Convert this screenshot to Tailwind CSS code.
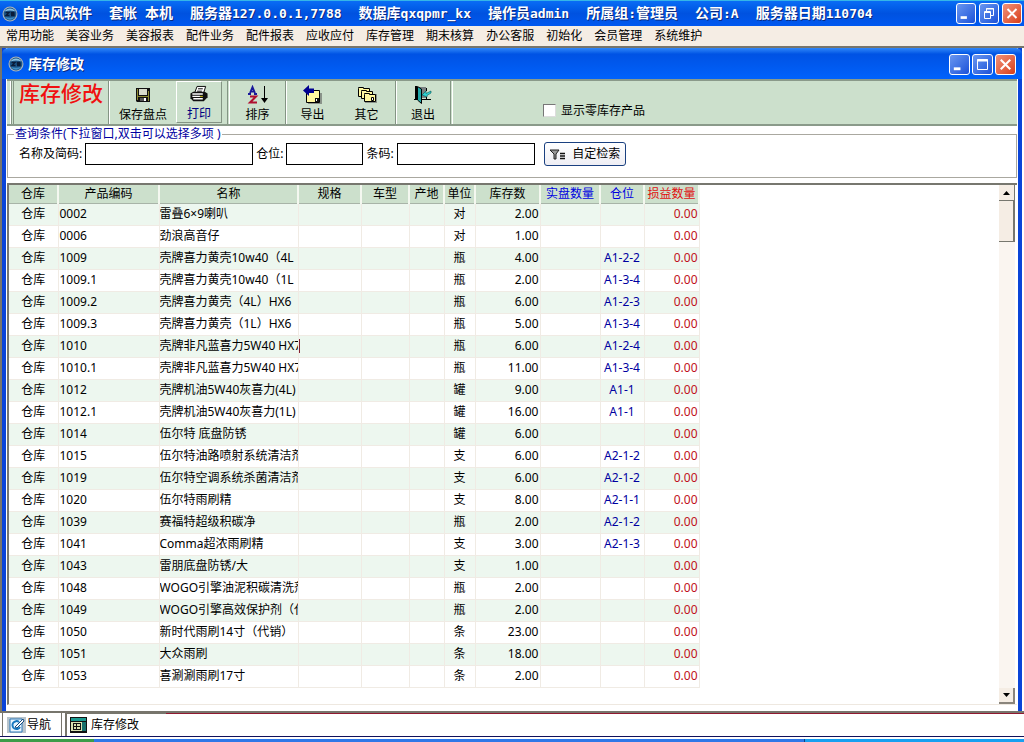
<!DOCTYPE html>
<html lang="zh-CN">
<head>
  <meta charset="UTF-8">
  <title>自由风软件 - 库存修改</title>
  <meta name="viewport" content="width=device-width, initial-scale=1.0">
  <script src="https://cdn.jsdelivr.net/npm/@tailwindcss/browser@4"></script>
</head>

<body class="min-h-screen flex flex-col bg-white text-black text-[12px] leading-4 font-['Noto_Sans','Noto_Sans_CJK_SC',sans-serif] whitespace-nowrap overflow-x-hidden">

  <!-- Shared symbols -->
  <svg class="hidden">
    <symbol id="logo" viewBox="0 0 16 16">
      <circle cx="8" cy="8" r="7.5" fill="#a9b4bc" />
      <circle cx="8" cy="8" r="6.4" fill="#1c5588" />
      <path d="M2.500 5.500C5 1.500 11 1.500 13.500 5.500C10 4 6 4 2.500 5.500Z" fill="#8cc4e4" />
      <path d="M3 11C6 14.500 10 14.500 13 11C10 12 6 12 3 11Z" fill="#3f8ec4" />
      <path d="M3.500 6.500H7L4 9.500H7.500M12.500 6.500H9.500V8H12V9.500H9" fill="none" stroke="#0a1c38" stroke-width="1.400" />
    </symbol>
    <symbol id="close" viewBox="0 0 20 20">
      <path d="M5 5L15 15M15 5L5 15" stroke="#fff" stroke-width="2.200" />
    </symbol>
    <symbol id="minimize" viewBox="0 0 20 20">
      <path d="M4 13H11V16H4Z" fill="#fff" />
    </symbol>
  </svg>

  <!-- Application title bar -->
  <header class="h-[26px] flex items-center border-t border-[#35b5e8] pl-[2px] pr-[2px] bg-linear-to-b from-[#0a6cf5] via-[#0052e0] to-[#0058f0] text-white text-[14px] font-bold [text-shadow:1px_1px_0_#0a2a80]">
    <svg class="w-4 h-4 mr-1"><use href="#logo" /></svg>
    <h1 class="flex gap-[17px]">
      <span>自由风软件</span>
      <span class="flex gap-2"><span>套帐</span><span>本机</span></span>
      <span>服务器<span class="font-['DejaVu_Sans_Mono',monospace] text-[13px]">127.0.0.1,7788</span></span>
      <span>数据库<span class="font-['DejaVu_Sans_Mono',monospace] text-[13px]">qxqpmr_kx</span></span>
      <span>操作员<span class="font-['DejaVu_Sans_Mono',monospace] text-[13px]">admin</span></span>
      <span>所属组<span class="font-['DejaVu_Sans_Mono',monospace] text-[13px]">:</span>管理员</span>
      <span>公司<span class="font-['DejaVu_Sans_Mono',monospace] text-[13px]">:A</span></span>
      <span>服务器日期<span class="font-['DejaVu_Sans_Mono',monospace] text-[13px]">110704</span></span>
    </h1>
    <div class="flex gap-[3px] ml-auto">
      <button aria-label="最小化" class="w-5 h-[21px] rounded-[3px] border border-white bg-linear-to-br from-[#6a96f0] to-[#1c50d8]"><svg class="w-full h-full"><use href="#minimize" /></svg></button>
      <button aria-label="还原" class="w-5 h-[21px] rounded-[3px] border border-white bg-linear-to-br from-[#6a96f0] to-[#1c50d8]">
        <svg class="w-full h-full" viewBox="0 0 18 19" fill="none" stroke="#fff"><path d="M6.500 7V4.500H13.500V11.500H11M6 5H14M4.500 7.500H10.500V14.500H4.500ZM4 8.500H11" /></svg>
      </button>
      <button aria-label="关闭" class="w-5 h-[21px] rounded-[3px] border border-white bg-linear-to-br from-[#f09078] to-[#d83c10]"><svg class="w-full h-full"><use href="#close" /></svg></button>
    </div>
  </header>

  <!-- Menu bar -->
  <nav class="h-5 flex items-center gap-3 pl-[6px] bg-[#f5ede4]">
    <a href="#">常用功能</a>
    <a href="#">美容业务</a>
    <a href="#">美容报表</a>
    <a href="#">配件业务</a>
    <a href="#">配件报表</a>
    <a href="#">应收应付</a>
    <a href="#">库存管理</a>
    <a href="#">期末核算</a>
    <a href="#">办公客服</a>
    <a href="#">初始化</a>
    <a href="#">会员管理</a>
    <a href="#">系统维护</a>
  </nav>

  <!-- Child window -->
  <main class="flex-1 flex flex-col border-t-2 border-l-2 border-t-[#77756c] border-l-[#77756c] pr-[2px] bg-white">
    <section class="flex-1 flex flex-col border-x-4 border-x-[#0a44d8]">
      <div class="h-[31px] -mx-1 flex items-center pl-[6px] pr-[6px] pt-px rounded-t-md bg-linear-to-b from-[#2f86f8] via-[#0052e4] via-20% to-[#0062fc] text-white font-bold [text-shadow:1px_1px_0_#0a2a80]">
        <svg class="w-4 h-4 mr-1"><use href="#logo" /></svg>
        <h2 class="text-[14px]">库存修改</h2>
        <div class="flex gap-[2px] ml-auto">
          <button aria-label="最小化" class="w-[21px] h-[21px] rounded-[3px] border border-white bg-linear-to-br from-[#6a96f0] to-[#1c50d8]"><svg class="w-full h-full"><use href="#minimize" /></svg></button>
          <button aria-label="最大化" class="w-[21px] h-[21px] rounded-[3px] border border-white bg-linear-to-br from-[#6a96f0] to-[#1c50d8]">
            <svg class="w-full h-full" viewBox="0 0 19 19" fill="none" stroke="#fff"><path d="M4.500 4.500H14.500V14.500H4.500Z" /><path d="M4 5.500H15" stroke-width="2" /></svg>
          </button>
          <button aria-label="关闭" class="w-[21px] h-[21px] rounded-[3px] border border-white bg-linear-to-br from-[#f09078] to-[#d83c10]"><svg class="w-full h-full"><use href="#close" /></svg></button>
        </div>
      </div>

      <!-- Toolbar -->
      <div class="h-[47px] flex mx-px border-t-2 border-t-[#8a9a8a] border-b-2 border-b-[#8a9a8a] bg-[#cce0cc] pl-[3px]">
        <div class="w-[2px] mr-px border-l border-white bg-[#849484]"></div>
        <div class="w-[96px] border-x border-[#849484] pl-[5px] text-[21px] leading-6 font-medium text-[#f01010]">库存修改</div>
        <div class="flex gap-1 border-l border-white pl-1 pr-1">
          <button class="w-[58px] flex flex-col items-center gap-[2px] pt-1">
            <svg class="w-5 h-5" viewBox="0 0 20 20"><path d="M3 3H17V17H4L3 16Z" fill="#111" /><path d="M4 4H5V15H4ZM15 6H16V16H15ZM4 11H16V12H4Z" fill="#8a8a30" /><path d="M6 4H14V10H6Z" fill="#d8dccb" /><path d="M7 13H13V16H7Z" fill="#555" /><path d="M11 13H13V16H11Z" fill="#fff" /></svg>
            保存盘点
          </button>
          <button class="w-[46px] h-[42px] flex flex-col items-center gap-[2px] pt-[3px] border border-t-white border-l-white border-r-[#849484] border-b-[#849484] text-[#000080]">
            <svg class="w-5 h-5" viewBox="0 0 20 20"><path d="M5.500 8L8 1.500H17L15 8Z" fill="#fff" stroke="#000" /><path d="M9 4H14M8 6.500H13" stroke="#000" /><path d="M1 9L4 7H16L19 9V13L15 17H4L1 14Z" fill="#111" /><path d="M3 9.500H14M3 12H11M4 14.500H14" stroke="#fff" stroke-width="1.400" /><path d="M11 12H14" stroke="#e0d020" /></svg>
            打印
          </button>
        </div>
        <div class="w-[3px] ml-px border-x border-l-[#849484] border-r-white"></div>
        <button class="w-[55px] flex flex-col items-center gap-[2px] pt-1">
          <svg class="w-[22px] h-5" viewBox="0 0 22 20" fill="none"><path d="M1 9H4M3 8L5.500 2L8 8M4 6.500H7M7 9H10" stroke="#1a1a9a" stroke-width="1.800" /><path d="M3 11.500H9L3 17.500H10" stroke="#b01030" stroke-width="2" /><path d="M17.500 1V17" stroke="#000" /><path d="M14 13H21L17.500 18Z" fill="#000" /></svg>
          排序
        </button>
        <div class="w-[2px] border-l border-[#849484] bg-white"></div>
        <button class="w-[51px] flex flex-col items-center gap-[2px] pt-1">
          <svg class="w-5 h-5" viewBox="0 0 20 20"><path d="M5 8H19V19H5Z" fill="#8a938a" /><path d="M3.500 6.500H7V5.500H16.500V17.500H3.500Z" fill="#fff8a0" stroke="#000" /><path d="M0 5.500L6 0V3.500H11V8H6V11Z" fill="#000090" /><path d="M12 13H16V17H12Z" fill="#111" /><path d="M13.500 14V16" stroke="#fff" /></svg>
          导出
        </button>
        <button class="w-[57px] flex flex-col items-center gap-[2px] pt-1">
          <svg class="w-5 h-5" viewBox="0 0 20 20" stroke="#000"><path d="M8 9H20V18H8Z" fill="#8a938a" stroke="none" /><path d="M1.500 3.500V2.500H6.500V3.500H12.500V11.500H1.500Z" fill="#fff8a0" /><path d="M4.500 6.500V5.500H9.500V6.500H15.500V13.500H4.500Z" fill="#fff8a0" /><path d="M7.500 9.500V8.500H12.500V9.500H18.500V16.500H7.500Z" fill="#fff8a0" /><path d="M14.500 12.500H16.500V15.500H14.500Z" fill="#fff" /></svg>
          其它
        </button>
        <div class="w-[2px] border-l border-[#849484] bg-white"></div>
        <button class="w-[52px] flex flex-col items-center gap-[2px] pt-1">
          <svg class="w-5 h-5" viewBox="0 0 20 20"><path d="M3 2H13V13H3Z" fill="#777f80" /><path d="M2 1H4V15H2ZM13 2V9M13 11V15" fill="#000" /><path d="M4.500 1.500L8.500 4V18.500L4.500 15Z" fill="#20a8a8" stroke="#000" /><path d="M18 6L13 8.500V6L9 10L14 12V10.500L18 8Z" fill="#30d0d0" stroke="#055" stroke-width=".6" /><path d="M1 14.500H4M9 14.500H18M13.500 3V6M13.500 12V14" stroke="#000" /></svg>
          退出
        </button>
        <div class="w-[3px] ml-px border-x border-l-[#849484] border-r-white"></div>
        <label class="flex items-center gap-[5px] ml-[90px] mt-4">
          <input type="checkbox" class="appearance-none w-[13px] h-[13px] bg-white border border-t-[#777] border-l-[#777] border-r-[#ddd] border-b-[#ddd]">
          显示零库存产品
        </label>
      </div>

      <!-- Query conditions -->
      <fieldset class="h-[52px] mx-px border border-[#aaa8a0] pl-[11px]">
        <legend class="ml-[-5px] px-px text-[#0000a0]">查询条件(下拉窗口,双击可以选择多项 )</legend>
        <div class="flex items-center gap-[3px]">
          <label for="name-code">名称及简码:</label>
          <input type="text" id="name-code" class="w-[168px] h-[22px] border border-black bg-white px-1">
          <label for="position">仓位:</label>
          <input type="text" id="position" class="w-[77px] h-[22px] border border-black bg-white px-1">
          <label for="barcode">条码:</label>
          <input type="text" id="barcode" class="w-[138px] h-[22px] border border-black bg-white px-1">
          <button class="w-[82px] h-6 ml-[6px] flex items-center justify-center gap-[6px] rounded-[3px] border border-[#1a4080] bg-linear-to-b from-white to-[#eeeef4]">
            <svg class="w-[17px] h-3" viewBox="0 0 17 12"><path d="M1 2H10L7 6V11H5V6Z" fill="#999" stroke="#222" /><path d="M11 5.500H16M11 8H16M11 10.500H16" stroke="#111" stroke-width="1.500" /></svg>
            自定检索
          </button>
        </div>
      </fieldset>

      <!-- Stock grid -->
      <div class="flex-1 flex items-stretch mt-[5px] mx-px mb-[6px] border-t-2 border-l-2 border-[#77776f] border-b border-b-[#eee8e0]">
        <div class="flex-1">
          <table class="table-fixed w-[690px] border-collapse">
            <colgroup>
              <col class="w-[49px]"><col class="w-[101px]"><col class="w-[139px]"><col class="w-[63px]"><col class="w-[48px]"><col class="w-[35px]"><col class="w-[31px]"><col class="w-[65px]"><col class="w-[60px]"><col class="w-[44px]"><col class="w-[55px]">
            </colgroup>
            <thead>
              <tr class="h-[18px] bg-[#cce0cc] [&>th]:font-normal [&>th]:p-0 [&>th]:border-r-2 [&>th]:border-r-[#f4f8f0] [&>th]:border-b [&>th]:border-b-[#a8b4a8]">
                <th>仓库</th><th>产品编码</th><th>名称</th><th>规格</th><th>车型</th><th>产地</th><th>单位</th><th>库存数</th>
                <th class="text-[#0000e0]">实盘数量</th><th class="text-[#0000e0]">仓位</th><th class="text-[#e01010]">损益数量</th>
              </tr>
            </thead>
            <tbody id="stock-rows"></tbody>
          </table>
        </div>
        <!-- Scroll bar -->
        <div class="w-4 flex flex-col mr-[2px] bg-[#faf5f0]">
          <button aria-label="向上" class="h-4 flex items-center justify-center bg-[#f5ede4] border-r border-b border-[#77776f]"><svg class="w-[7px] h-1" viewBox="0 0 7 4"><path d="M0 4L3.500 0L7 4Z" /></svg></button>
          <div class="h-[41px] bg-[#f5ede4] border-r-2 border-b border-[#77776f]"></div>
          <button aria-label="向下" class="h-4 mt-auto flex items-center justify-center bg-[#f5ede4] border-r-2 border-b-2 border-[#8a857c]"><svg class="w-[7px] h-1" viewBox="0 0 7 4"><path d="M0 0L3.500 4L7 0Z" /></svg></button>
        </div>
      </div>
    </section>
  </main>

  <!-- Window tabs -->
  <footer class="h-[25px] flex items-stretch border-t-2 border-t-[#77756c] pl-[2px] bg-white">
    <button class="w-[60px] flex items-center gap-px pl-1 border-l border-r border-[#77756c]">
      <svg class="w-[19px] h-4" viewBox="0 0 19 16"><path d="M0 0H19V16H0Z" fill="#b8c4cc" /><path d="M3 2H15V15H3Z" fill="#eaf6ff" stroke="#2c78b8" /><path d="M12 5A4 4 0 1 0 13 10" fill="none" stroke="#1878c0" stroke-width="2" /><path d="M8 10L16 2L17 4L10 11Z" fill="#fff" stroke="#134a80" /></svg>
      导航
    </button>
    <button class="w-[101px] flex items-center gap-1 pl-[3px] ml-[3px] border-t border-l-2 border-[#77756c]">
      <svg class="w-[17px] h-4" viewBox="0 0 17 16"><path d="M0 0H17V16H0Z" fill="#111" /><path d="M1 1H16V4H1Z" fill="#1a9a90" /><path d="M1 5H16V14H1Z" fill="#d8e0b0" /><path d="M3 6.500H10M3 9.500H10M3 12.500H10M3.500 6V13M6.500 6V13M10.500 6V13" stroke="#111" /><path d="M12 5H16V14H12Z" fill="#16706c" /></svg>
      库存修改
    </button>
    <div class="flex-1 border-t border-[#901830]"></div>
  </footer>
  <div class="h-[6px] flex flex-col border-t border-[#10105c] pt-[2px]">
    <div class="flex-1 flex">
      <div class="w-[94px] bg-[#3c9c48]"></div>
      <div class="flex-1 bg-[#2f78e8]"></div>
      <div class="w-[220px] border-l border-[#104080] bg-[#18a0f0]"></div>
    </div>
  </div>

  <script>
    // code, name, unit, stock, position
    const items = [
      ["0002", "雷叠6×9喇叭", "对", "2.00", ""],
      ["0006", "劲浪高音仔", "对", "1.00", ""],
      ["1009", "壳牌喜力黄壳10w40（4L", "瓶", "4.00", "A1-2-2"],
      ["1009.1", "壳牌喜力黄壳10w40（1L", "瓶", "2.00", "A1-3-4"],
      ["1009.2", "壳牌喜力黄壳（4L）HX6", "瓶", "6.00", "A1-2-3"],
      ["1009.3", "壳牌喜力黄壳（1L）HX6", "瓶", "5.00", "A1-3-4"],
      ["1010", "壳牌非凡蓝喜力5W40 HX7", "瓶", "6.00", "A1-2-4"],
      ["1010.1", "壳牌非凡蓝喜力5W40 HX7", "瓶", "11.00", "A1-3-4"],
      ["1012", "壳牌机油5W40灰喜力(4L)", "罐", "9.00", "A1-1"],
      ["1012.1", "壳牌机油5W40灰喜力(1L)", "罐", "16.00", "A1-1"],
      ["1014", "伍尔特 底盘防锈", "罐", "6.00", ""],
      ["1015", "伍尔特油路喷射系统清洁剂", "支", "6.00", "A2-1-2"],
      ["1019", "伍尔特空调系统杀菌清洁剂", "支", "6.00", "A2-1-2"],
      ["1020", "伍尔特雨刷精", "支", "8.00", "A2-1-1"],
      ["1039", "赛福特超级积碳净", "瓶", "2.00", "A2-1-2"],
      ["1041", "Comma超浓雨刷精", "支", "3.00", "A2-1-3"],
      ["1043", "雷朋底盘防锈/大", "支", "1.00", ""],
      ["1048", "WOGO引擎油泥积碳清洗剂", "瓶", "2.00", ""],
      ["1049", "WOGO引擎高效保护剂（代", "瓶", "2.00", ""],
      ["1050", "新时代雨刷14寸（代销）", "条", "23.00", ""],
      ["1051", "大众雨刷", "条", "18.00", ""],
      ["1053", "喜涮涮雨刷17寸", "条", "2.00", ""]
    ];

    const cell = "py-0 border-r border-b border-[#f0ebe4] overflow-hidden";
    const caret = '<div class="w-px h-[14px] bg-[#802030]"></div>';

    document.getElementById("stock-rows").innerHTML = items.map(([code, name, unit, stock, position]) => `
      <tr class="h-[22px] odd:bg-[#edf7ef]">
        <td class="${cell} text-center">仓库</td>
        <td class="${cell} pl-px">${code}</td>
        <td class="${cell}">${name}</td>
        <td class="${cell}">${code === "1010" ? caret : ""}</td>
        <td class="${cell}"></td>
        <td class="${cell}"></td>
        <td class="${cell} text-center">${unit}</td>
        <td class="${cell} text-right pr-px">${stock}</td>
        <td class="${cell}"></td>
        <td class="${cell} text-center text-[#0000a0]">${position}</td>
        <td class="${cell} text-right pr-px text-[#c01020]">0.00</td>
      </tr>
    `).join("");
  </script>
</body>
</html>
